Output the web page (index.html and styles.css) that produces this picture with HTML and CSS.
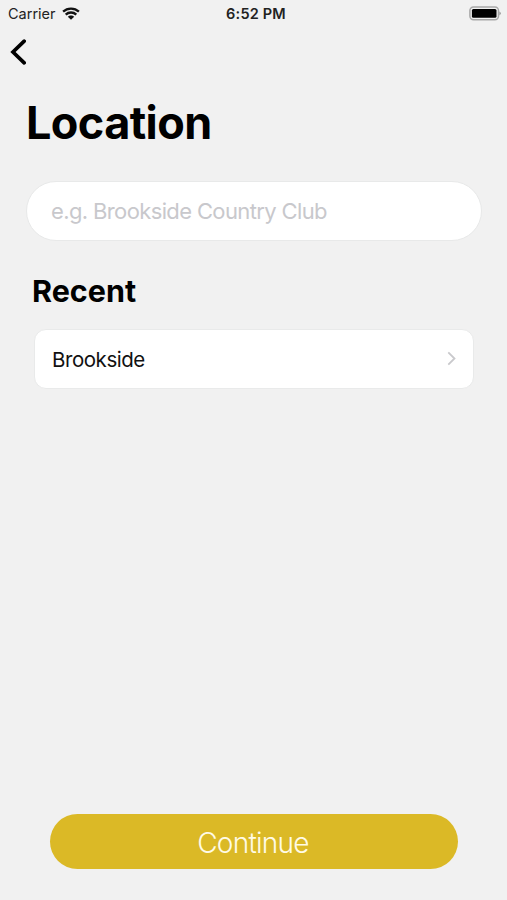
FILE: index.html
```html
<!DOCTYPE html>
<html lang="en">
<head>
    <meta charset="UTF-8">
    <meta name="viewport" content="width=device-width,user-scalable=no">
    <title>Location</title>
    <link rel="stylesheet" href="styles.css">
</head>
<body>
    <section class="wrap">
        <header class="status">
            <div class="carrier">
                <span>Carrier</span>
                <svg class="wifi" viewBox="0 0 18 13" width="18" height="13">
                    <path d="M1.1 4.6C5.5.5 12.5.5 16.9 4.6M3.7 7.6C6.7 4.8 11.3 4.8 14.3 7.6" fill="none" stroke="#111" stroke-width="2.3"/>
                    <path d="M5.8 9.7C7.5 8 10.5 8 12.2 9.7L9 12.8z" fill="#111"/>
                </svg>
            </div>
            <span class="time">6:52 PM</span>
            <svg class="battery" viewBox="0 0 32 15" width="32" height="15">
                <rect x=".9" y=".9" width="28.6" height="12.8" rx="3.6" fill="none" stroke="#a8a8a8" stroke-width="1.5"/>
                <rect x="2.9" y="2.9" width="24.6" height="8.8" rx="1.5"/>
                <path d="M30.4 5.4q1.4.5 1.4 1.9t-1.4 1.9z" fill="#999"/>
            </svg>
        </header>
        <nav class="nav">
            <a href="javascript:;" class="back">
                <svg viewBox="0 0 16 26" width="16" height="26">
                    <path d="M14.2 2.2L3 13L14.2 23.8" fill="none" stroke="#000" stroke-width="3.7" stroke-linecap="round"/>
                </svg>
            </a>
        </nav>
        <main class="content">
            <h1 class="title">Location</h1>
            <input class="search" type="text" placeholder="e.g. Brookside Country Club">
            <h2 class="subtitle">Recent</h2>
            <ul class="list">
                <li>
                    <span class="name">Brookside</span>
                    <svg class="arrow" viewBox="0 0 9 15" width="9" height="15">
                        <path d="M1.3 1.3L7.5 7.5L1.3 13.7" fill="none" stroke="#c9c9cc" stroke-width="1.8"/>
                    </svg>
                </li>
            </ul>
        </main>
        <button class="btn" type="button">Continue</button>
    </section>
</body>
</html>
```
FILE: styles.css
```css
body,html{
    margin:0;
    width:100%;
    height:100%;
    overflow:hidden;
}
body,input,button{
    font-family:Inter,"Liberation Sans",sans-serif;
}
.wrap{
    box-sizing:border-box;
    height:100%;
    padding-bottom:31px;
    display:flex;
    flex-direction:column;
    background:#f1f1f1;
}
.status{
    height:27px;
    padding:0 6px 0 8px;
    display:grid;
    grid-template-columns:1fr auto 1fr;
    align-items:center;
    font-size:14.5px;
    color:#222;
}
.carrier{
    display:flex;
    align-items:center;
    gap:6px;
}
.time{
    padding-left:3px;
    font-weight:600;
    letter-spacing:.2px;
}
.battery{
    justify-self:end;
}
.nav{
    height:50px;
    padding:0 10px;
    display:flex;
    align-items:center;
}
.back{
    height:26px;
}
.back svg{
    display:block;
}
.content{
    flex:1;
    padding:18px 25px 0 26px;
}
.title{
    margin:0 0 31px;
    line-height:55px;
    font-size:45px;
    font-weight:700;
    letter-spacing:-.6px;
}
.search{
    display:block;
    box-sizing:border-box;
    width:100%;
    height:60px;
    padding:0 24px 1px;
    border:1px solid #e8e9e9;
    border-radius:30px;
    background:#fff;
    font-size:22px;
    letter-spacing:-.63px;
    outline:none;
}
.search::placeholder{
    color:#c8c8cc;
    opacity:1;
}
.subtitle{
    margin:30px 0 18px 6px;
    line-height:40px;
    font-size:30.5px;
    font-weight:700;
}
.list{
    margin:0 8px;
    padding:0;
    list-style:none;
}
.list li{
    box-sizing:border-box;
    height:60px;
    padding:0 17px;
    display:flex;
    align-items:center;
    justify-content:space-between;
    border:1px solid #e9eaea;
    border-radius:12px;
    background:#fff;
}
.name{
    font-size:20.5px;
    letter-spacing:-.45px;
    color:#111;
}
.arrow{
    padding-bottom:1px;
}
.btn{
    height:55px;
    margin:0 49px 0 50px;
    padding:2px 2px 0 0;
    border:0;
    border-radius:28px;
    background:#dbb926;
    font-size:28px;
    font-weight:300;
    letter-spacing:-.75px;
    color:#fffbe6;
}
```
